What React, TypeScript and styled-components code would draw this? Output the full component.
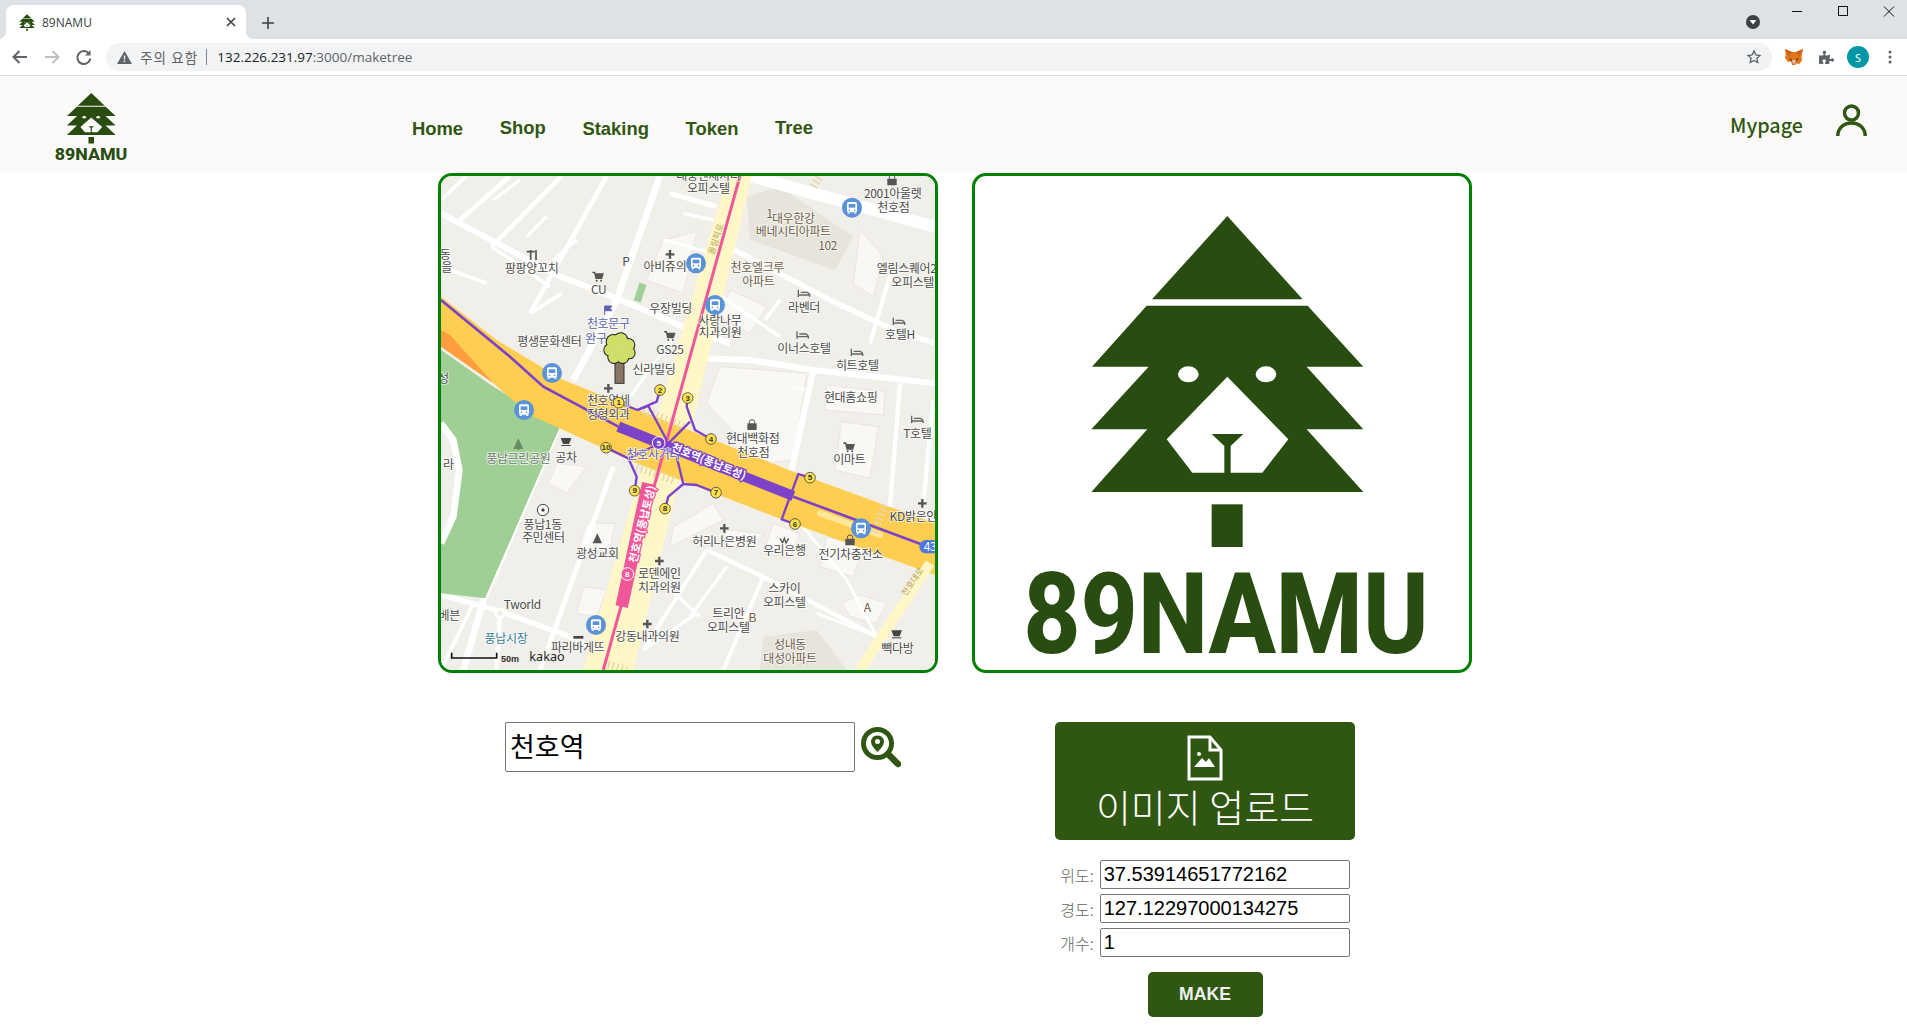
import React from "react";
import styled, { createGlobalStyle } from "styled-components";
import { FaPuzzlePiece } from "react-icons/fa";

const GREEN = "#2f5711";
const LOGO = "#294c11";
const UI = `"Liberation Sans", "Noto Sans CJK KR", sans-serif`;

const Global = createGlobalStyle`
  html, body { margin: 0; padding: 0; background: #fff; }
  body { font-family: ${UI}; overflow: hidden; }
`;

const Page = styled.div`
  width: 1907px;
  height: 1027px;
  display: flex;
  flex-direction: column;
  overflow: hidden;
`;

/* ---------- browser chrome ---------- */
const TabStrip = styled.div`
  height: 39px;
  background: #dee1e6;
  display: flex;
  align-items: flex-end;
  padding-left: 6px;
  flex: none;
`;
const Tab = styled.div`
  position: relative;
  width: 240px;
  height: 34px;
  background: #fff;
  border-radius: 8px 8px 0 0;
  display: flex;
  align-items: center;
  padding: 0 10px 0 13px;
  box-sizing: border-box;
  gap: 7px;
  &::before, &::after {
    content: "";
    position: absolute;
    bottom: 0;
    width: 8px;
    height: 8px;
  }
  &::before { left: -8px; background: radial-gradient(circle at 0 0, transparent 8px, #fff 8.5px); }
  &::after { right: -8px; background: radial-gradient(circle at 100% 0, transparent 8px, #fff 8.5px); }
`;
const TabTitle = styled.span`
  flex: 1;
  font: 12px "Open Sans", "Noto Sans", sans-serif;
  color: #3c4043;
`;
const NewTab = styled.svg`
  margin: 0 0 10px 16px;
`;
const WindowArea = styled.div`
  margin-left: auto;
  margin-right: -5px;
  display: flex;
  align-items: flex-start;
  align-self: flex-start;
  height: 39px;
`;
const Dropdown = styled.svg`
  margin: 15px 14px 0 0;
`;
const WinButton = styled.svg`
  margin: 6px 0 0 0;
  width: 46px;
  height: 12px;
`;
const Toolbar = styled.div`
  height: 36px;
  background: #fff;
  border-bottom: 1px solid #dcd8e0;
  display: flex;
  align-items: center;
  flex: none;
`;
const NavBtn = styled.svg<{ $first?: boolean }>`
  width: 32px;
  height: 20px;
  flex: none;
  margin-left: ${(p) => (p.$first ? "4px" : "0")};
`;
const Omnibox = styled.div`
  margin-left: 6px;
  width: 1666px;
  height: 28px;
  border-radius: 14px;
  background: #f1f3f4;
  display: flex;
  align-items: center;
  padding: 0 10px 0 11px;
  box-sizing: border-box;
  flex: none;
`;
const Warn = styled.span`
  font: 13.5px "Noto Sans CJK KR", sans-serif;
  color: #5f6368;
  margin-left: 8px;
  letter-spacing: 1.1px;
`;
const Sep = styled.span`
  width: 1px;
  height: 16px;
  background: #80868b;
  margin: 0 10px 0 8px;
`;
const Url = styled.span`
  font: 13.5px "Open Sans", "Noto Sans", sans-serif;
  color: #202124;
  flex: 1;
  & > i { font-style: normal; color: #5f6368; }
`;
const Exts = styled.div`
  display: flex;
  align-items: center;
  margin-left: 13px;
  gap: 15px;
`;
const Puzzle = styled(FaPuzzlePiece)`
  color: #5f6368;
  margin: 0 -2px 0 1px;
`;
const Avatar = styled.div`
  width: 22px;
  height: 22px;
  border-radius: 50%;
  background: #0097a7;
  color: #fff;
  font: 11px "Noto Sans", sans-serif;
  display: flex;
  align-items: center;
  justify-content: center;
`;

/* ---------- site nav ---------- */
const Nav = styled.header`
  height: 96px;
  background: #fbfaf9;
  display: flex;
  align-items: flex-start;
  flex: none;
  padding: 17px 40px 0 55px;
  box-sizing: border-box;
`;
const Menu = styled.nav`
  display: flex;
  gap: 36.7px;
  margin-left: 285px;
  padding-top: 25px;
`;
const MenuItem = styled.a<{ $up?: boolean }>`
  font: bold 18.4px "Liberation Sans", sans-serif;
  line-height: 22px;
  color: ${GREEN};
  margin-top: ${(p) => (p.$up ? "-1px" : "0")};
`;
const NavRight = styled.div`
  margin-left: auto;
  display: flex;
  align-items: flex-start;
  gap: 33px;
`;
const Mypage = styled.a`
  font: 500 19.8px "Noto Sans CJK KR", sans-serif;
  line-height: 28px;
  color: ${GREEN};
  margin-top: 18px;
`;
const Person = styled.svg`
  margin-top: 11px;
`;

/* ---------- panels ---------- */
const Main = styled.main`
  display: flex;
  gap: 34px;
  margin: 1px 0 0 438px;
`;
const Column = styled.section`
  width: 500px;
  display: flex;
  flex-direction: column;
`;
const Panel = styled.div`
  width: 500px;
  height: 500px;
  box-sizing: border-box;
  border: 3px solid #008000;
  border-radius: 14px;
  overflow: hidden;
  background: #fff;
`;
const PanelSvg = styled.svg`
  display: block;
  width: 494px;
  height: 494px;
`;
const SearchRow = styled.div`
  margin: 49px 0 0 67px;
  display: flex;
  align-items: center;
  gap: 6px;
`;
const SearchInput = styled.input`
  width: 350px;
  height: 50px;
  box-sizing: border-box;
  border: 1px solid #767676;
  border-radius: 2px;
  padding: 0 4px 3px;
  font: 27px "Noto Sans CJK KR", sans-serif;
  color: #000;
  outline: none;
`;
const Controls = styled.div`
  margin: 49px 0 0 83px;
  width: 300px;
  display: flex;
  flex-direction: column;
  align-items: center;
`;
const Upload = styled.button`
  width: 300px;
  height: 118px;
  border: 0;
  border-radius: 5px;
  background: ${GREEN};
  color: #fff;
  display: flex;
  flex-direction: column;
  align-items: center;
  padding: 13px 0 0;
  font: 300 38px "Noto Sans CJK KR", sans-serif;
  line-height: 50px;
  gap: 0;
`;
const Form = styled.div`
  margin-top: 20px;
  display: flex;
  flex-direction: column;
  gap: 5px;
`;
const Row = styled.label`
  display: flex;
  align-items: center;
  gap: 6px;
  color: #666;
  font: 300 16px "Noto Sans CJK KR", sans-serif;
`;
const Field = styled.input`
  width: 250px;
  height: 29px;
  box-sizing: border-box;
  border: 1px solid #767676;
  border-radius: 2px;
  padding: 0 3px;
  font: 20px "Liberation Sans", sans-serif;
  color: #000;
  outline: none;
`;
const Make = styled.button`
  margin-top: 15px;
  width: 115px;
  height: 45px;
  border: 0;
  border-radius: 5px;
  background: ${GREEN};
  color: #eee;
  font: bold 17.6px "Liberation Sans", sans-serif;
`;

/* ---------- map svg text ---------- */
const tone: Record<string, string> = {
  d: "#4b4b4b",
  b: "#6d5b46",
  u: "#5a63ad",
  g: "#6b7a6a",
  t: "#2f7b9b",
  w: "#ffffff",
};
const MapLabel = styled.text<{ $t?: string }>`
  font: 36px "Noto Sans CJK KR", sans-serif;
  fill: ${(p) => tone[p.$t || "d"]};
  text-anchor: middle;
  paint-order: stroke;
  stroke: ${(p) => (p.$t === "w" ? "none" : "rgba(255, 255, 255, 0.75)")};
  stroke-width: 5px;
  letter-spacing: -1px;
`;
const ExitNum = styled.text<{ $light?: boolean }>`
  font: bold 24px "Liberation Sans", sans-serif;
  fill: ${(p) => (p.$light ? "#fff" : "#333")};
  text-anchor: middle;
`;
const StationText = styled.text<{ $edge: string }>`
  font: bold 33px "Noto Sans CJK KR", sans-serif;
  fill: #fff;
  text-anchor: middle;
  paint-order: stroke;
  stroke: ${(p) => p.$edge};
  stroke-width: 8px;
`;
const RoadText = styled.text`
  font: 26px "Noto Sans CJK KR", sans-serif;
  fill: #b9a657;
  text-anchor: middle;
`;
const Kakao = styled.text`
  font: 38px "Noto Sans", sans-serif;
  fill: #222;
`;
const Scale = styled.text`
  font: bold 27px "Liberation Sans", sans-serif;
  fill: #333;
`;
const LogoWord = styled.text`
  font: 800 340px "Roboto", sans-serif;
  fill: ${LOGO};
`;

type L = [string, number, number, string?];
const labels: L[] = [
  ["대웅펜체시티", 835, 30], ["오피스텔", 835, 70], ["2001아울렛", 1388, 85], ["천호점", 1390, 125],
  ["1", 1018, 145, "b"], ["대우한강", 1090, 158, "b"], ["베네시티아파트", 1090, 198, "b"], ["102", 1193, 240, "b"],
  ["동", 45, 268], ["을", 50, 305], ["팡팡양꼬치", 305, 310], ["아비쥬의", 705, 303],
  ["천호엘크루", 982, 305, "b"], ["아파트", 985, 348, "b"], ["엘림스퀘어2", 1430, 310], ["오피스텔", 1448, 350],
  ["CU", 506, 372], ["우장빌딩", 722, 428], ["라벤더", 1122, 425], ["호텔H", 1410, 508],
  ["사랑나무", 870, 464], ["치과의원", 870, 502], ["천호문구", 535, 474, "u"], ["완구", 498, 520, "u"],
  ["평생문화센터", 358, 527], ["GS25", 720, 552], ["이너스호텔", 1122, 550], ["히트호텔", 1282, 601],
  ["신라빌딩", 672, 612], ["현대홈쇼핑", 1262, 697], ["천호연세", 535, 705], ["정형외과", 535, 746],
  ["T호텔", 1462, 803], ["현대백화점", 968, 820], ["천호점", 970, 860], ["이마트", 1258, 883],
  ["풍납근린공원", 265, 878, "g"], ["공차", 408, 875], ["성", 40, 640], ["라", 55, 898],
  ["천호사거리", 670, 868, "u"], ["KD밝은안", 1450, 1053], ["풍납1동", 338, 1076], ["주민센터", 340, 1117],
  ["광성교회", 502, 1163], ["허리나은병원", 883, 1127], ["우리은행", 1063, 1155], ["전기차충전소", 1262, 1168],
  ["로덴에인", 688, 1225], ["치과의원", 688, 1265], ["스카이", 1063, 1270], ["오피스텔", 1063, 1310],
  ["Tworld", 277, 1316], ["트리안", 895, 1345], ["오피스텔", 895, 1385], ["베븐", 58, 1350],
  ["풍납시장", 228, 1420, "t"], ["파리바게뜨", 443, 1447], ["강동내과의원", 652, 1413], ["빽다방", 1402, 1450],
  ["성내동", 1080, 1438, "b"], ["대성아파트", 1080, 1480, "b"], ["P", 588, 288],
  ["B", 967, 1355, "b"], ["A", 1312, 1325, "b"],
];

const roads: [string, number][] = [
  ["33,130 380,315 560,385 760,470 900,520", 18],
  ["960,18 1515,170", 36],
  ["720,70 860,110", 15],
  ["905,235 1200,390 1390,480 1515,520", 16],
  ["810,565 960,570 1150,600 1515,640", 18],
  ["690,18 560,390 430,630", 20],
  ["240,18 90,150", 14],
  ["395,18 185,230", 14],
  ["530,18 300,430", 14],
  ["110,18 33,90", 11],
  ["33,290 170,340", 11],
  ["185,230 360,350", 11],
  ["300,430 395,370", 11],
  ["270,30 190,90", 10],
  ["350,140 290,200", 10],
  ["440,210 370,270", 10],
  ["385,770 160,1290 100,1500", 20],
  ["33,1275 200,1320 420,1400 500,1440", 16],
  ["830,1140 1000,1220 1340,1400", 13],
  ["1150,600 1085,900", 18],
  ["1410,640 1380,1010", 13],
  ["1385,300 1320,520", 12],
  ["830,1140 640,1440", 12],
  ["1000,1220 880,1500", 12],
  ["550,890 330,1500", 15],
  ["860,370 1050,500", 11],
  ["1050,390 1005,450", 11],
  ["1110,1060 1250,1230 1340,1400", 9],
  ["1510,690 1480,1000", 13],
  ["200,1500 210,1330", 13],
  ["33,1500 130,1300", 11],
  ["640,1440 800,1330", 10],
  ["700,1240 810,1340", 10],
  ["890,1190 780,1340", 10],
  ["1090,650 1125,660", 10],
  ["1160,1330 1340,1400", 8],
  ["700,210 850,250", 10],
  ["760,130 850,150", 10],
  ["600,680 730,500", 10],
];

const buildings: string[] = [
  "870,590 1130,610 1090,870 1000,880 830,700",
  "1190,645 1365,665 1360,735 1185,720",
  "1235,755 1345,770 1320,925 1215,900",
  "700,210 800,185 760,370 650,330",
  "900,360 1010,410 960,490 870,440",
  "1290,180 1360,260 1330,380 1270,340",
  "460,1250 530,1260 500,1340 440,1330",
  "380,880 470,890 410,970 355,940",
  "470,1060 555,1060 540,1140 440,1150",
  "1190,1100 1300,1130 1270,1220 1170,1190",
  "890,1080 1000,1090 980,1130 870,1130",
  "730,1070 850,1000 880,1050 720,1130",
  "1030,1060 1110,1090 1080,1165 1000,1150",
  "1235,1300 1290,1275 1370,1300 1340,1360 1260,1340",
];

const hatches = [
  "640,720 760,770",
  "620,890 730,930",
  "1365,1005 1330,1095",
  "1150,50 1170,18",
  "520,1480 590,1500",
];

const Bus = ({ x, y }: { x: number; y: number }) => (
  <g>
    <circle cx={x} cy={y} r={30} fill="#5b93d8" />
    <rect x={x - 15} y={y - 17} width={30} height={31} rx={5} fill="#fff" />
    <rect x={x - 10} y={y - 11} width={20} height={11} fill="#5b93d8" />
    <circle cx={x - 8} cy={y + 7} r={2.5} fill="#5b93d8" />
    <circle cx={x + 8} cy={y + 7} r={2.5} fill="#5b93d8" />
    <rect x={x - 13} y={y + 14} width={6} height={4} fill="#fff" />
    <rect x={x + 7} y={y + 14} width={6} height={4} fill="#fff" />
  </g>
);

const Plus = ({ x, y }: { x: number; y: number }) => (
  <path d={`M${x - 13} ${y}H${x + 13}M${x} ${y - 13}V${y + 13}`} stroke="#555" strokeWidth={7} />
);
const Bed = ({ x, y }: { x: number; y: number }) => (
  <path d={`M${x - 17} ${y - 13}V${y + 9}M${x - 17} ${y + 3}H${x + 17}V${y + 9}M${x - 10} ${y - 5}H${x + 10}L${x + 17} ${y + 1}`} stroke="#666" strokeWidth={4} fill="none" />
);
const Cart = ({ x, y }: { x: number; y: number }) => (
  <g fill="#555">
    <path d={`M${x - 16} ${y - 13}H${x - 9}L${x - 5} ${y + 5}H${x + 12}L${x + 16} ${y - 8}H${x - 8}`} stroke="#555" strokeWidth={4} />
    <circle cx={x - 3} cy={y + 12} r={3} />
    <circle cx={x + 10} cy={y + 12} r={3} />
  </g>
);
const Cup = ({ x, y }: { x: number; y: number }) => (
  <g fill="#444">
    <path d={`M${x - 16} ${y - 11}H${x + 16}L${x + 9} ${y + 7}H${x - 9}Z`} />
    <rect x={x - 14} y={y + 10} width={28} height={3} />
  </g>
);
const Lock = ({ x, y }: { x: number; y: number }) => (
  <g fill="#555">
    <rect x={x - 14} y={y - 6} width={28} height={20} rx={2} />
    <path d={`M${x - 8} ${y - 6}V${y - 11}a8 6 0 0 1 16 0V${y - 6}`} fill="none" stroke="#555" strokeWidth={3} />
  </g>
);

const exits: [string, number, number][] = [
  ["1", 566, 698], ["2", 690, 660], ["3", 773, 684], ["4", 843, 807], ["5", 1140, 923],
  ["6", 1095, 1062], ["7", 858, 968], ["8", 705, 1016], ["9", 614, 962], ["10", 528, 833],
];
const busStops = [[1266, 113], [798, 280], [855, 405], [366, 609], [282, 720], [1293, 1075], [498, 1365]];
const pluses = [[720, 253], [535, 655], [883, 1075], [688, 1173], [652, 1362], [1477, 1000]];
const beds = [[1122, 372], [1407, 456], [1118, 497], [1281, 549], [1462, 750]];
const exitLines = [
  "566,698 622,720 655,708 710,810",
  "690,660 680,695 622,720",
  "773,684 770,710 795,780 843,807",
  "780,755 715,820",
  "740,860 760,942 800,945 858,968",
  "705,1016 715,980 760,942",
  "528,833 595,865 620,920 614,962",
  "595,865 680,825",
  "1140,923 1105,912 1055,1048 1095,1062",
];
const crown = [
  [550, 515, 20], [572, 510, 20], [595, 525, 18], [597, 548, 17], [578, 562, 17], [552, 562, 17], [540, 540, 17], [570, 535, 24],
];

const MapArt = () => (
  <PanelSvg viewBox="33 18 1482 1482">
    <rect x="33" y="18" width="1482" height="1482" fill="#f1efe9" />
    <polygon points="950,80 1050,50 1270,200 1215,300 960,210" fill="#e7e4dc" />
    <polygon points="1000,1400 1160,1380 1250,1500 990,1500" fill="#e7e4dc" />
    {buildings.map((p) => (
      <polygon key={p} points={p} fill="#f9f8f5" stroke="#e2dfd7" strokeWidth={2} />
    ))}
    {roads.map(([p, w]) => (
      <polyline key={p} points={p} fill="none" stroke="#fff" strokeWidth={w} strokeLinejoin="round" />
    ))}
    <circle cx="210" cy="1330" r="13" fill="#f1efe9" stroke="#fff" strokeWidth={8} />
    <polygon points="33,540 190,650 390,770 165,1285 33,1270" fill="#a0cf95" />
    <polyline points="33,760 70,810 88,900 70,1040 33,1120" fill="#f1efe9" stroke="#fff" strokeWidth={20} />
    <polygon points="893,18 965,18 610,1500 460,1500" fill="#fff8c6" />
    <polygon points="33,380 200,510 400,630 1090,905 1515,1060 1515,1215 1060,1050 620,880 300,735 190,640 33,480" fill="#ffcd50" />
    <polygon points="33,480 60,495 190,640 33,530" fill="#ff9d3f" />
    <polyline points="1500,1180 1290,1500" fill="none" stroke="#fff8c6" strokeWidth={30} />
    <polyline points="1170,1030 1350,1095" stroke="#ffe79a" strokeWidth={18} strokeLinecap="round" />
    {hatches.map((p) => (
      <polyline key={p} points={p} fill="none" stroke="#e6d9ae" strokeWidth={26} strokeDasharray="5 9" />
    ))}
    <polyline points="930,18 520,1500" fill="none" stroke="#f0569a" strokeWidth={9} />
    <polyline points="655,940 575,1310" stroke="#f0569a" strokeWidth={38} />
    <polyline points="33,390 240,560 340,650 565,770" fill="none" stroke="#7c43c9" strokeWidth={8} />
    <polyline points="1090,980 1480,1125" fill="none" stroke="#7c43c9" strokeWidth={8} />
    <polyline points="565,770 690,820" stroke="#7c43c9" strokeWidth={32} />
    <polyline points="690,820 1090,978" stroke="#7c43c9" strokeWidth={30} />
    {exitLines.map((p) => (
      <polyline key={p} points={p} fill="none" stroke="#7c43c9" strokeWidth={7} strokeLinejoin="round" />
    ))}
    <rect x="1468" y="1110" width="60" height="40" rx="20" fill="#4c78e0" />
    <MapLabel x={1500} y={1142} $t="w">43</MapLabel>
    {pluses.map(([x, y]) => <Plus key={`${x}`} x={x} y={y} />)}
    {beds.map(([x, y]) => <Bed key={`${x}`} x={x} y={y} />)}
    <Cart x={503} y={320} /><Cart x={718} y={498} /><Cart x={1256} y={832} />
    <Cup x={408} y={815} /><Cup x={1400} y={1392} />
    <Lock x={1386} y={32} /><Lock x={966} y={766} /><Lock x={1260} y={1112} />
    <path d="M290 245h24M302 240v30M318 240v30" stroke="#555" strokeWidth={5} />
    <path d="M265 805l15 32h-30Z" fill="#6a8a66" />
    <rect x="262" y="830" width="6" height="10" fill="#6a8a66" />
    <circle cx="339" cy="1020" r="17" fill="#fff" stroke="#444" strokeWidth={3} />
    <circle cx="339" cy="1020" r="5" fill="#444" />
    <path d="M502 1090l14 30h-28Z" fill="#555" />
    <path d="M1050 1105l8 14 5-14 5 14 8-14" stroke="#555" strokeWidth={4} fill="none" />
    <path d="M430 1398h30v8h-30Z" fill="#444" />
    <path d="M524 408v26M524 408h22l-6 7 6 7h-22" fill="#5a63ad" stroke="#5a63ad" strokeWidth={3} />
    <rect x="620" y="340" width="22" height="55" transform="rotate(18 630 365)" fill="#a0cf95" />
    {labels.map(([t, x, y, c], i) => (
      <MapLabel key={i} x={x} y={y} $t={c}>{t}</MapLabel>
    ))}
    <RoadText transform="translate(866 210) rotate(-72)">올림픽로</RoadText>
    <RoadText transform="translate(1455 1240) rotate(-55)">천호대로</RoadText>
    <StationText $edge="#7c43c9" transform="translate(832 885) rotate(22)">천호역(풍납토성)</StationText>
    <StationText $edge="#f0569a" transform="translate(648 1065) rotate(-76)">천호역(풍납토성)</StationText>
    <circle cx="686" cy="819" r="19" fill="#7c43c9" stroke="#fff" strokeWidth={3} />
    <ExitNum x={686} y={828} $light>5</ExitNum>
    <circle cx="592" cy="1212" r="19" fill="#f0569a" stroke="#fff" strokeWidth={3} />
    <ExitNum x={592} y={1221} $light>8</ExitNum>
    {busStops.map(([x, y]) => <Bus key={`${x}`} x={x} y={y} />)}
    {exits.map(([n, x, y]) => (
      <g key={n}>
        <circle cx={x} cy={y} r={16} fill="#ffe24a" stroke="#444" strokeWidth={2.5} />
        <ExitNum x={x} y={y + 8}>{n}</ExitNum>
      </g>
    ))}
    <rect x="555" y="565" width="27" height="75" fill="#8a7565" stroke="#333" strokeWidth={3} />
    {crown.map(([x, y, r]) => <circle key={`a${x}${y}`} cx={x} cy={y} r={r + 3} fill="#222" />)}
    {crown.map(([x, y, r]) => <circle key={`b${x}${y}`} cx={x} cy={y} r={r} fill="#cfdf6a" />)}
    <path d="M65 1448v16h135v-16" fill="none" stroke="#111" strokeWidth={5} />
    <Scale x={213} y={1476}>50m</Scale>
    <Kakao x={298} y={1472}>kakao</Kakao>
  </PanelSvg>
);

const TreeShape = () => (
  <g>
    <polygon points="802,138 1028,388 576,388" fill={LOGO} />
    <path
      fillRule="evenodd"
      fill={LOGO}
      d="M560 407H1043L1210 590H1040L1210 778H1040L1210 966H394L562 778H394L566 590H396ZM802 620L620 808L697 908H793V828L755 792H850L812 828V908H907L985 808Z"
    />
    <ellipse cx="685" cy="613" rx="31" ry="24" fill="#fff" />
    <ellipse cx="918" cy="613" rx="31" ry="24" fill="#fff" />
    <rect x="755" y="1003" width="93" height="128" fill={LOGO} />
  </g>
);

const LogoMark = styled.svg`
  display: block;
  width: 72px;
  height: 67px;
`;

const LogoArt = () => (
  <>
    <TreeShape />
    <LogoWord x={190} y={1448} textLength={1216} lengthAdjust="spacingAndGlyphs">89NAMU</LogoWord>
  </>
);

const Favicon = () => (
  <svg width="16" height="17" viewBox="380 130 840 1010" preserveAspectRatio="none">
    <TreeShape />
  </svg>
);

const Fox = () => (
  <svg width="18" height="16" viewBox="0 0 18 16">
    <path d="M0 0l7 3h4l7-3-1.500 8 .8 3-3 4-3-.5-1.300 1.500H7.200L6 12.500l-3 .5-3-4 .8-3z" fill="#e2761b" />
    <path d="M4 9l3 1-.5 3zM14 9l-3 1 .5 3z" fill="#763d16" />
    <path d="M7.200 11h3.600l-.5 3.500H7.700z" fill="#d7c1b3" />
    <path d="M0 0l7 3-3 5zM18 0l-7 3 3 5z" fill="#cd6116" />
  </svg>
);

export default function App() {
  return (
    <Page>
      <Global />
      <TabStrip>
        <Tab>
          <Favicon />
          <TabTitle>89NAMU</TabTitle>
          <svg width="10" height="10" viewBox="0 0 10 10">
            <path d="M1 1l8 8M9 1l-8 8" stroke="#3c4043" strokeWidth="1.600" />
          </svg>
        </Tab>
        <NewTab width="12" height="12" viewBox="0 0 12 12">
          <path d="M6 0v12M0 6h12" stroke="#3c4043" strokeWidth="1.600" />
        </NewTab>
        <WindowArea>
          <Dropdown width="14" height="14" viewBox="0 0 14 14">
            <circle cx="7" cy="7" r="7" fill="#3c4043" />
            <path d="M3.500 5h7L7 9.500z" fill="#fff" />
          </Dropdown>
          <WinButton viewBox="0 0 46 12">
            <path d="M18 5.500h10" stroke="#111" strokeWidth="1" />
          </WinButton>
          <WinButton viewBox="0 0 46 12">
            <rect x="18.500" y=".5" width="9" height="9" fill="none" stroke="#111" />
          </WinButton>
          <WinButton viewBox="0 0 46 12">
            <path d="M18 .5l10 10M28 .5l-10 10" stroke="#111" strokeWidth="1" />
          </WinButton>
        </WindowArea>
      </TabStrip>
      <Toolbar>
        <NavBtn $first viewBox="0 0 32 20">
          <path d="M23 10H10M15.500 4L9.500 10l6 6" fill="none" stroke="#5f6368" strokeWidth="2" />
        </NavBtn>
        <NavBtn viewBox="0 0 32 20">
          <path d="M9 10h13M16.500 4l6 6-6 6" fill="none" stroke="#bdc1c6" strokeWidth="2" />
        </NavBtn>
        <NavBtn viewBox="0 0 32 20">
          <path d="M21 6.500A6.500 6.500 0 1 0 22.300 11.500" fill="none" stroke="#5f6368" strokeWidth="2" />
          <path d="M22.500 3v5.500H17z" fill="#5f6368" />
        </NavBtn>
        <Omnibox>
          <svg width="15" height="13" viewBox="0 0 15 13">
            <path d="M7.500 0L15 13H0z" fill="#5f6368" />
            <path d="M6.800 4.500h1.400v4H6.800zM6.800 9.500h1.400v1.400H6.800z" fill="#f1f3f4" />
          </svg>
          <Warn>주의 요함</Warn>
          <Sep />
          <Url>132.226.231.97<i>:3000/maketree</i></Url>
          <svg width="16" height="16" viewBox="0 0 24 24" fill="none" stroke="#5f6368" strokeWidth="2">
            <path d="M12 3l2.800 5.900 6.200.8-4.600 4.300 1.200 6.300L12 17.200 6.400 20.300l1.200-6.300L3 9.700l6.200-.8z" />
          </svg>
        </Omnibox>
        <Exts>
          <Fox />
          <Puzzle size={15} />
          <Avatar>S</Avatar>
          <svg width="12" height="14" viewBox="0 0 12 14">
            <g fill="#5f6368"><circle cx="6" cy="2" r="1.500" /><circle cx="6" cy="7" r="1.500" /><circle cx="6" cy="12" r="1.500" /></g>
          </svg>
        </Exts>
      </Toolbar>

      <Nav>
        <LogoMark viewBox="195 138 1205 1317" preserveAspectRatio="none"><LogoArt /></LogoMark>
        <Menu>
          <MenuItem>Home</MenuItem>
          <MenuItem $up>Shop</MenuItem>
          <MenuItem>Staking</MenuItem>
          <MenuItem>Token</MenuItem>
          <MenuItem $up>Tree</MenuItem>
        </Menu>
        <NavRight>
          <Mypage>Mypage</Mypage>
          <Person width="31" height="33" viewBox="0 0 31 33" fill="none" stroke={GREEN} strokeWidth="3.500">
            <circle cx="15.500" cy="9" r="7" />
            <path d="M1.800 32c0-8 6-13 13.700-13s13.700 5 13.700 13" />
          </Person>
        </NavRight>
      </Nav>

      <Main>
        <Column>
          <Panel><MapArt /></Panel>
          <SearchRow>
            <SearchInput readOnly value="천호역" />
            <svg width="40" height="41" viewBox="0 0 40 41" fill="none">
              <circle cx="16.500" cy="16.500" r="14" stroke={GREEN} strokeWidth="5" />
              <path d="M27 27l10 10" stroke={GREEN} strokeWidth="6.500" strokeLinecap="round" />
              <path d="M16.500 8.500c-4 0-6.500 3-6.500 6 0 4 4 8 6.500 10.500 2.500-2.500 6.500-6.500 6.500-10.500 0-3-2.500-6-6.500-6z" fill={GREEN} />
              <circle cx="16.500" cy="14.500" r="2.500" fill="#fff" />
            </svg>
          </SearchRow>
        </Column>
        <Column>
          <Panel>
            <PanelSvg viewBox="45 18 1482 1482"><LogoArt /></PanelSvg>
          </Panel>
          <Controls>
            <Upload>
              <svg width="36" height="46" viewBox="0 0 36 46" fill="none" stroke="#fff" strokeWidth="3">
                <path d="M2 2H23L34 15V44H2Z" />
                <path d="M23 2V15H34" />
                <circle cx="12" cy="19" r="2" fill="#fff" stroke="none" />
                <path d="M7 32L15 23L19 27L22 23L28 32Z" fill="#fff" stroke="none" />
              </svg>
              이미지 업로드
            </Upload>
            <Form>
              <Row>위도:<Field readOnly value="37.53914651772162" /></Row>
              <Row>경도:<Field readOnly value="127.12297000134275" /></Row>
              <Row>개수:<Field readOnly value="1" /></Row>
            </Form>
            <Make>MAKE</Make>
          </Controls>
        </Column>
      </Main>
    </Page>
  );
}
